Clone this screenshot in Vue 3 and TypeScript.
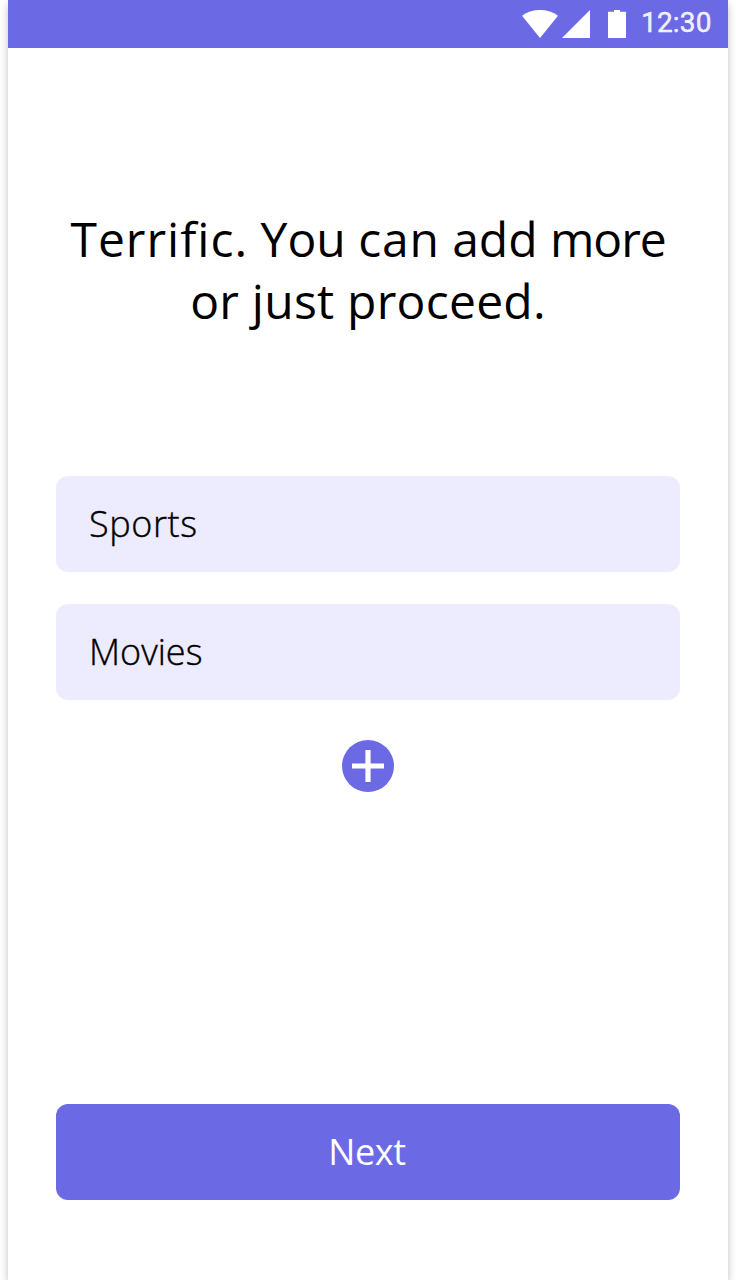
<script setup lang="ts">
import { ref } from 'vue'

interface Topic {
  id: number
  name: string
}

const time = '12:30'
const topics = ref<Topic[]>([
  { id: 1, name: 'Sports' },
  { id: 2, name: 'Movies' },
])
</script>

<template>
  <main class="screen">
    <header class="status-bar">
      <svg class="wifi" width="36" height="28" viewBox="0 0 36 28" aria-hidden="true">
        <path d="M18 28 0 5.7C5 2 11 0 18 0s13 2 18 5.7Z" />
      </svg>
      <svg class="signal" width="28" height="28" viewBox="0 0 28 28" aria-hidden="true">
        <path d="M0 28 28 0v28Z" />
      </svg>
      <svg class="battery" width="18" height="28" viewBox="0 0 18 28" aria-hidden="true">
        <path d="M0 1.7h6V0h6v1.7h6V28H0Z" />
      </svg>
      <span class="time">{{ time }}</span>
    </header>

    <h1 class="title">
      <span class="line first"><span class="lead">Terrific.</span> You <span class="can">can</span> add <span class="more">more</span></span>
      <span class="line second">or just proceed.</span>
    </h1>

    <ul class="topics">
      <li v-for="topic in topics" :key="topic.id" class="topic">
        <span :class="['name', topic.name.toLowerCase()]">{{ topic.name }}</span>
      </li>
    </ul>

    <button class="add" type="button" aria-label="Add">
      <svg width="52" height="52" viewBox="0 0 52 52" aria-hidden="true">
        <circle cx="26" cy="26" r="26" fill="#6c69e5" />
        <path d="M26 10v32M10 26h32" stroke="#fff" stroke-width="5.2" />
      </svg>
    </button>

    <button class="next" type="button"><span>Next</span></button>
  </main>
</template>

<style>
body {
  margin: 0;
  background: #fff;
  overflow: hidden;
}
</style>

<style scoped>
.screen {
  box-sizing: border-box;
  display: flex;
  flex-direction: column;
  width: 720px;
  height: 1280px;
  margin: 0 auto;
  padding-bottom: 80px;
  background: #fff;
  box-shadow: 0 4px 8px rgba(0, 0, 0, 0.25);
  font-family: "Open Sans", "Noto Sans", sans-serif;
  color: #000;
}
.status-bar {
  box-sizing: border-box;
  display: flex;
  align-items: center;
  justify-content: flex-end;
  height: 48px;
  padding-right: 16px;
  background: #6c69e5;
}
.status-bar svg {
  fill: #fff;
}
.signal {
  margin-left: 4px;
}
.battery {
  margin-left: 18px;
}
.time {
  width: 71px;
  margin: -2px 0 0 15px;
  font: 400 28px/32px Roboto, sans-serif;
  letter-spacing: 0.2px;
  -webkit-text-stroke: 0.5px currentColor;
  color: rgba(255, 255, 255, 0.9);
  white-space: nowrap;
}
.title {
  margin: 160px 0 0;
  font-size: 48px;
  font-weight: 400;
  line-height: 62px;
  text-align: center;
}
.line {
  display: block;
  white-space: nowrap;
}
.lead {
  letter-spacing: 1px;
}
.can {
  letter-spacing: 0.8px;
}
.more {
  letter-spacing: -1.1px;
}
.second {
  letter-spacing: 0.25px;
}
.topics {
  display: flex;
  flex-direction: column;
  gap: 32px;
  margin: 144px 48px 0;
  padding: 0;
  list-style: none;
}
.topic {
  box-sizing: border-box;
  display: flex;
  align-items: center;
  height: 96px;
  padding: 0 33px 2px;
  border-radius: 12px;
  background: #edecfe;
  font-size: 36px;
  font-weight: 300;
  -webkit-text-stroke: 0.4px currentColor;
}
.sports {
  letter-spacing: 0.6px;
}
.add {
  align-self: center;
  width: 52px;
  height: 52px;
  margin-top: 40px;
  padding: 0;
  border: 0;
  background: none;
}
.add svg {
  display: block;
}
.next {
  height: 96px;
  margin: auto 48px 0;
  padding: 0 2px 2px 0;
  border: 0;
  border-radius: 12px;
  background: #6c69e5;
  color: #fff;
  font: 400 36px "Open Sans", "Noto Sans", sans-serif;
  letter-spacing: -0.4px;
}
</style>
